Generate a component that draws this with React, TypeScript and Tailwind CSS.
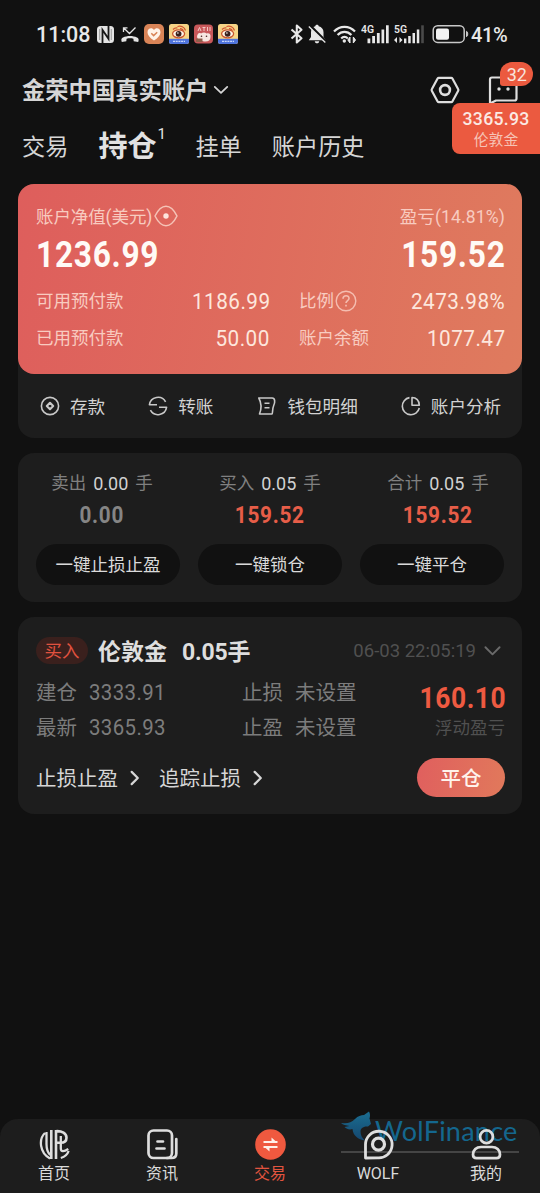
import type { ReactNode } from "react";

const Chevron = ({ className, d }: { className: string; d: string }) => (
  <svg viewBox="0 0 18 12" className={className} fill="none" stroke="currentColor" strokeWidth="2" strokeLinecap="round" strokeLinejoin="round">
    <path d={d} />
  </svg>
);

const Weibo = () => (
  <svg viewBox="0 0 20 20" className="h-5 w-5">
    <defs>
      <clipPath id="wb"><rect width="20" height="20" rx="2.5" /></clipPath>
    </defs>
    <g clipPath="url(#wb)">
      <rect width="20" height="20" fill="#f6d486" />
      <rect y="14.800" width="20" height="5.200" fill="#4f74dc" />
      <path d="M4 17.400h12" stroke="#c9d6fa" strokeWidth="1.400" strokeDasharray="2 .700" />
      <path d="M8.500 2.500c3.500-1 7 .4 8 4M4 5.500c1.500-1.500 3-2 4.500-1.500M11 4.600c1.800 0 2.800.8 3.200 2.300" stroke="#d0522f" strokeWidth="1.300" fill="none" />
      <ellipse cx="9.600" cy="9.800" rx="6" ry="4" fill="#fff4e6" stroke="#c8572f" strokeWidth="1.300" />
      <circle cx="9.600" cy="9.800" r="2.900" fill="#3a201c" />
      <circle cx="8.900" cy="9" r=".8" fill="#fff" />
    </g>
  </svg>
);

function StatusBar() {
  return (
    <div className="flex h-[68px] items-center pl-[36px] text-[#e8e8e8]">
      <span className="w-[61px] pt-[2px] text-[21.500px] leading-none font-medium">11:08</span>
      <svg viewBox="0 0 17 17" className="h-[17px] w-[17px]">
        <rect width="17" height="17" rx="3.500" fill="#e4e4e4" />
        <path d="M5.500 17V4l6 8.800V0" fill="none" stroke="#181818" strokeWidth="1.800" />
        <path d="M2.700 3v11M14.300 3v11" fill="none" stroke="#888" strokeWidth=".8" />
      </svg>
      <svg viewBox="0 0 18 17" className="ml-[7px] h-[17px] w-[18px]">
        <path d="M2.500 6V1.800h4M2.800 2l5.700 5.500 6-6" fill="none" stroke="#e4e4e4" strokeWidth="1.300" />
        <path d="M.4 14.600c-.3-1.400.3-2.300 1.600-3 4-2 10-2 14 0 1.300.7 1.900 1.600 1.600 3l-.4 1.400-4.500-.8-.3-2.500c-2.200-.6-4.600-.6-6.800 0l-.3 2.500-4.500.8z" fill="#e4e4e4" />
      </svg>
      <svg viewBox="0 0 20 20" className="ml-[5px] h-5 w-5">
        <rect width="20" height="20" rx="5" fill="#d98457" />
        <path d="M10 16.500C5.500 13.500 3.500 11 3.500 8.200 3.500 4.300 8 3 10 6c2-3 6.500-1.700 6.500 2.200 0 2.800-2 5.300-6.500 8.300z" fill="#fff3e8" />
        <path d="M7.300 9.300l2.300 2.300 3.600-3.400" fill="none" stroke="#d98457" strokeWidth="1.500" />
      </svg>
      <div className="ml-[5px]"><Weibo /></div>
      <svg viewBox="0 0 19 20" className="ml-[5px] h-5 w-[19px]">
        <rect y=".500" width="19" height="19" rx="4" fill="#c8585a" />
        <path d="M4 7l1.500-3.500L7 7M8.500 3.500h3M10 3.500V7M13.500 3v4M16 3v4" stroke="#f3c9c4" fill="none" />
        <path d="M3 13c0-3 2-5 4-3.500 2-1.300 4-1.300 5.500 0C15 8.500 17 10 16.500 13c0 3-2 4.500-5 4.500S4 17 3 13z" fill="#f7e7e1" />
        <path d="M2 14.500h6.500v3.500H2z" fill="#8f5f4c" />
        <circle cx="7.500" cy="12.300" r=".8" fill="#4a2423" />
        <circle cx="12.500" cy="12.300" r=".8" fill="#4a2423" />
      </svg>
      <div className="ml-[5px]"><Weibo /></div>

      <svg viewBox="0 0 14 20" className="ml-[52px] h-5 w-[14px]" fill="none" stroke="#e8e8e8" strokeWidth="2.100" strokeLinejoin="round">
        <path d="M1.500 5.500l10 8.700L6.800 18.500V1.500l4.700 4.300-10 8.700" />
      </svg>
      <svg viewBox="0 0 19 20" className="ml-1 h-5 w-[19px]">
        <path d="M9 .8c1 0 1.600.6 1.700 1.400 3 .8 4.800 2.900 4.800 6v4.800l2.300 3.300H.8L3 13V8.200c0-3 1.500-5.200 4.300-6C7.400 1.400 8 .8 9 .8zM6.800 17.300h4.400c0 2.700-4.400 2.700-4.400 0z" fill="#e8e8e8" />
        <path d="M2 1.500l16.500 16.500" stroke="#111" strokeWidth="2.500" />
        <path d="M.8 2.500l16.500 16" stroke="#e8e8e8" strokeWidth="1.300" />
      </svg>
      <svg viewBox="0 0 24 20" className="ml-[6px] h-5 w-6">
        <path d="M1 7.500c6-6.300 15-6.300 21 0M4.600 11c4-4.200 9.800-4.200 13.800 0M8.200 14.400c1.900-2 4.700-2 6.600 0" fill="none" stroke="#e8e8e8" strokeWidth="2.200" />
        <circle cx="11.300" cy="17" r="1.700" fill="#e8e8e8" />
        <path d="M14.800 16l2.200-3v6zM22.500 16l-2.200-3v6z" fill="#e8e8e8" stroke="#e8e8e8" />
      </svg>
      <svg viewBox="0 0 29 20" className="ml-[4px] h-5 w-[29px]" fill="#e8e8e8">
        <text x="0" y="8.600" fontSize="10.500" fontWeight="600" textLength="13" lengthAdjust="spacingAndGlyphs" fontFamily="Roboto, sans-serif">4G</text>
        <path d="M6.500 14.500h2.800v4.700H6.500zM11.200 12h2.800v7.200h-2.800zM15.900 9h2.800v10.200h-2.800zM20.500 5.500h2.700v13.700h-2.700zM25 1.300h2.700v17.900H25z" />
      </svg>
      <svg viewBox="0 0 31 20" className="ml-1 h-5 w-[31px]" fill="#e8e8e8">
        <text x="0" y="8.600" fontSize="10.500" fontWeight="600" textLength="13" lengthAdjust="spacingAndGlyphs" fontFamily="Roboto, sans-serif">5G</text>
        <path d="M0 16l3-3v6zM8.500 16l-3-3v6zM10 14.500h2.400v4.700H10zM14.200 12h2.500v7.200h-2.500zM18.500 9H21v10.200h-2.500zM22.800 5.500h2.500v13.700h-2.500z" />
        <path d="M27.200 1.300h2.600v17.900h-2.600z" fill="#4a4a4a" />
      </svg>
      <svg viewBox="0 0 38 20" className="ml-[7px] h-5 w-[38px]">
        <rect x="1.200" y="1.800" width="31" height="16.600" rx="4.500" fill="none" stroke="#c9c9c9" strokeWidth="1.500" />
        <rect x="4" y="4.500" width="13" height="11.200" rx="2" fill="#f2f2f2" />
        <path d="M34.500 7.300c1.700.3 1.700 5 0 5.400z" fill="#c9c9c9" stroke="#c9c9c9" />
      </svg>
      <span className="ml-[1px] origin-left scale-x-[0.950] pt-[2px] text-[21px] leading-none font-medium tracking-[-0.300px]">41%</span>
    </div>
  );
}

function Header() {
  return (
    <header className="relative h-[116px] text-[#d6d6d6]">
      <div className="flex h-[44px] items-center pl-[22px]">
        <span className="pt-[4px] text-[23.300px] leading-none font-bold">金荣中国真实账户</span>
        <Chevron className="ml-[5px] h-3 w-[16px]" d="M2 2.500l7 6.700 7-6.700" />
        <svg viewBox="0 0 30 28" className="ml-[201px] h-7 w-[30px]" fill="none" stroke="#dedede" strokeWidth="2.200" strokeLinejoin="round">
          <path d="M8.800 1.800h12.400q.8 0 1.200.700l5.800 10.800q.4.700 0 1.400l-5.800 10.800q-.4.700-1.200.700H8.800q-.8 0-1.200-.7L1.800 14.700q-.4-.7 0-1.400L7.600 2.500q.4-.7 1.200-.7z" />
          <circle cx="15" cy="14" r="4.900" strokeWidth="2.600" />
        </svg>
        <div className="relative ml-[28px]">
          <svg viewBox="0 0 30 28" className="h-7 w-[30px]" fill="none" stroke="#dedede" strokeWidth="2.200" strokeLinejoin="round">
            <path d="M4 1.500h22.500q2 0 2 2v19q0 2-2 2H8l-6 3V3.500q0-2 2-2z" />
            <circle cx="11" cy="13" r="1.700" fill="#dedede" stroke="none" />
            <circle cx="20" cy="13" r="1.700" fill="#dedede" stroke="none" />
          </svg>
          <span className="absolute top-[-14px] left-[12px] flex h-6 w-[33px] items-center justify-center rounded-[12px] rounded-bl-[3px] bg-[#eb5a3f] pt-[2px] text-[18px] leading-none text-[#f8e3dc]">32</span>
        </div>
      </div>
      <nav className="flex h-[68px] items-center pt-[3px] pl-[22px] text-[23.200px] leading-none">
        <span>交易</span>
        <span className="relative ml-[30px] text-[29px] font-bold text-[#e2e2e2]">
          持仓
          <sup className="absolute top-[-6px] left-[59px] text-[15px] leading-none font-normal">1</sup>
        </span>
        <span className="ml-[39px]">挂单</span>
        <span className="ml-[30px]">账户历史</span>
      </nav>
      <div className="absolute top-[35px] right-0 flex h-[51px] w-[88px] flex-col items-center rounded-l-[8px] bg-[#eb5a40] pt-[6px]">
        <span className="scale-x-[0.930] text-[19px] leading-[19px] font-medium tracking-[0.300px] text-[#fbe9e3]">3365.93</span>
        <span className="mt-[5px] text-[14.800px] leading-[15px] text-[#f6c3b6]">伦敦金</span>
      </div>
    </header>
  );
}

const Action = ({ icon, label, className }: { icon: ReactNode; label: string; className?: string }) => (
  <div className={`flex items-center ${className ?? ""}`}>
    <svg viewBox="0 0 20 20" className="mr-[10px] h-5 w-5" fill="none" stroke="#c8c8c8" strokeWidth="1.600" strokeLinejoin="round">{icon}</svg>
    <span className="pt-[4px]">{label}</span>
  </div>
);

const Amount = ({ label, hint, value }: { label: string; hint?: ReactNode; value: string }) => (
  <div className="flex h-[37px] items-center justify-between">
    <span className="flex items-center text-[17.500px] text-[#f8cbc0]">
      <span className="pt-[3px]">{label}</span>
      {hint}
    </span>
    <span className="origin-right scale-x-[0.940] pt-[2px] tracking-[0.500px]">{value}</span>
  </div>
);

function Account() {
  return (
    <section className="mx-[18px] h-[254px] rounded-[16px] bg-[#1d1d1d]">
      <div className="h-[190px] rounded-[16px] bg-linear-[100deg,#de5e5c,#df7b5e] pt-[21px] pr-[17px] pl-[18px] text-[17.500px] leading-none text-[#f8cbc0]">
        <div className="flex h-[22px] items-center justify-between">
          <div className="flex items-center">
            <span className="pt-[3px] tracking-[-0.100px]">账户净值(美元)</span>
            <svg viewBox="0 0 24 22" className="ml-[2px] h-[22px] w-6" fill="none" stroke="#f5c3b7" strokeWidth="1.500">
              <path d="M1 11C3.500 6 7.500 1.300 12 1.300S20.500 6 23 11c-2.500 5-6.500 9.700-11 9.700S3.500 16 1 11z" strokeLinejoin="round" />
              <circle cx="12" cy="11" r="2.700" fill="#fde4dc" stroke="none" />
            </svg>
          </div>
          <span className="pt-[3px] tracking-[0.150px]">盈亏(14.81%)</span>
        </div>
        <div className="flex h-[54px] items-center justify-between pt-[2px] text-[36px] font-bold tracking-[0.800px] text-[#fffaf6]">
          <span className="origin-left scale-x-[0.880]">1236.99</span>
          <span className="mr-[-1px] origin-right scale-x-[0.880]">159.52</span>
        </div>
        <div className="mt-[1px] grid grid-cols-[234px_29px_1fr] text-[22px] text-[#fde7dd]">
          <Amount label="可用预付款" value="1186.99" />
          <span />
          <Amount
            label="比例"
            value="2473.98%"
            hint={
              <svg viewBox="0 0 22 22" className="ml-[1px] h-[22px] w-[22px]" fill="none" stroke="#f5bdb0" strokeWidth="1.400">
                <circle cx="11" cy="11" r="9.800" />
                <path d="M8 8.700c.2-4 6.200-3.800 6-.2-.1 2-3 2.200-3 4.500M11 14.800v1.800" strokeWidth="1.600" />
              </svg>
            }
          />
          <Amount label="已用预付款" value="50.00" />
          <span />
          <Amount label="账户余额" value="1077.47" />
        </div>
      </div>
      <div className="flex h-[64px] items-center pr-[20px] pl-[22px] text-[17.600px] leading-none text-[#d2d2d2]">
        <Action label="存款" icon={<><circle cx="10" cy="10" r="8.600" /><path d="M10 6.800l3.200 3.200-3.200 3.200L6.800 10z" strokeWidth="2.100" /></>} />
        <Action className="ml-[43px]" label="转账" icon={<path d="M9 8.800H1.400A8.700 8.700 0 0 1 17.600 5.800M11 11.200h7.600A8.700 8.700 0 0 1 2.400 14.200" />} />
        <Action className="ml-[44px]" label="钱包明细" icon={<path d="M1.800 2h13.400c3 0 3 4.500 1.500 7.500s-1 8.500-1.500 8.500H2.500c2-5 2-11-.7-16zM7.500 7.300h5M7.500 11.800h5" />} />
        <Action className="ml-[43px]" label="账户分析" icon={<><path d="M8.500 1.600a8.600 8.600 0 1 0 9.800 10.400" /><path d="M11 1.500v7.700h7.300c0-4.500-3-7.700-7.300-7.700z" /></>} />
      </div>
    </section>
  );
}

const totals = [
  { name: "卖出", lots: "0.00", value: "0.00", action: "一键止损止盈", color: "text-[#858585]", shift: "pr-3" },
  { name: "买入", lots: "0.05", value: "159.52", action: "一键锁仓", color: "text-[#e75d48]", shift: "" },
  { name: "合计", lots: "0.05", value: "159.52", action: "一键平仓", color: "text-[#e75d48]", shift: "pl-3" },
];

function Totals() {
  return (
    <section className="mx-[18px] mt-[15px] grid h-[149px] grid-cols-3 gap-[18px] rounded-[16px] bg-[#1d1d1d] px-[18px] pt-[19px] text-[17.500px] leading-none">
      {totals.map((t) => (
        <div key={t.name} className="flex flex-col items-center whitespace-nowrap">
          <div className={`flex h-[22px] items-center pt-[2px] text-[#808080] ${t.shift}`}>
            <span>{t.name}</span>
            <span className="mx-[7px] text-[18px] text-[#d2d2d2]">{t.lots}</span>
            <span>手</span>
          </div>
          <div className={`flex h-[42px] items-center pt-[1px] text-[23px] font-bold tracking-[0.800px] ${t.color} ${t.shift}`}>
            <span className="scale-x-[0.900]">{t.value}</span>
          </div>
          <button className="mt-[8px] h-[41px] w-full rounded-full bg-[#111] pt-[3px] text-[#dadada]">{t.action}</button>
        </div>
      ))}
    </section>
  );
}

const Field = ({ name, value, num }: { name: string; value: string; num?: boolean }) => (
  <div className="flex h-[35px] items-center">
    <span className="mr-[12px] pt-[3px]">{name}</span>
    <span className={num ? "origin-left scale-x-[0.950] pt-[2px] text-[21.500px] tracking-[0.400px]" : "pt-[3px]"}>{value}</span>
  </div>
);

function Position() {
  return (
    <section className="mx-[18px] mt-[15px] h-[197px] rounded-[16px] bg-[#1d1d1d] pt-[20px] pr-[17px] pl-[18px] text-[20.500px] leading-none text-[#7c7c7c]">
      <div className="flex h-[27px] items-center">
        <span className="flex h-[27px] w-[52px] items-center justify-center rounded-full bg-[#3a201d] pt-[2px] text-[17.500px] text-[#e0523f]">买入</span>
        <span className="ml-[10px] pt-[3px] text-[23px] font-bold text-[#dedede]">伦敦金</span>
        <span className="ml-[15px] pt-[3px] text-[23px] font-bold tracking-[-0.200px] text-[#dedede]">0.05手</span>
        <span className="ml-auto pt-[2px] text-[18.500px] text-[#505050]">06-03 22:05:19</span>
        <Chevron className="mr-[4px] ml-[8px] h-3 w-[17px] text-[#6a6a6a]" d="M1.500 2l7.500 7.500L16.500 2" />
      </div>
      <div className="mt-[10px] grid grid-cols-[206px_1fr_auto]">
        <div>
          <Field name="建仓" value="3333.91" num />
          <Field name="最新" value="3365.93" num />
        </div>
        <div>
          <Field name="止损" value="未设置" />
          <Field name="止盈" value="未设置" />
        </div>
        <div className="flex flex-col items-end pt-[10px]">
          <span className="mr-[-1px] origin-right scale-x-[0.910] text-[29px] font-bold tracking-[0.600px] text-[#ee5a41]">160.10</span>
          <span className="mt-[7px] text-[17.500px] text-[#505050]">浮动盈亏</span>
        </div>
      </div>
      <div className="mt-[14px] flex h-[39px] items-center text-[#d6d6d6]">
        <span className="pt-[3px]">止损止盈</span>
        <Chevron className="ml-[7px] h-[16px] w-[20px]" d="M6 .5L11.500 6 6 11.500" />
        <span className="ml-[14px] pt-[3px]">追踪止损</span>
        <Chevron className="ml-[7px] h-[16px] w-[20px]" d="M6 .5L11.500 6 6 11.500" />
        <button className="ml-auto h-[39px] w-[88px] rounded-full bg-linear-[100deg,#e05f5e,#e1795b] pt-[3px] font-medium text-[#fff3ec]">平仓</button>
      </div>
    </section>
  );
}

const tabs = [
  {
    label: "首页",
    icon: (
      <g fill="none" stroke="#dedede" strokeWidth="2.300">
        <path d="M6 4C-.5 10 .5 24 11 29.500M7.500 3v12c0 5 .5 8 3.800 11" />
        <path d="M12.300 1v29" strokeWidth="2.600" />
        <path d="M17 30V2.200c6-.4 10.500 2.300 10.500 6.500 0 3.500-2.500 5-6 5H17" strokeWidth="2.600" />
        <path d="M21.800 7v12.500c0 3.500 3 3.500 7.500.5M21.800 29c4-1.200 6.700-3.500 7.800-7" />
      </g>
    ),
  },
  {
    label: "资讯",
    icon: (
      <g fill="none" stroke="#dedede" strokeWidth="2.700" strokeLinecap="round">
        <rect x="1.500" y="1.500" width="23.500" height="27.500" rx="5" />
        <path d="M10.500 12.500h5.500M9.500 19.500h8M29.300 10v14.500c0 3-1.800 4.500-4.800 4.500H20" />
      </g>
    ),
  },
  {
    label: "交易",
    active: true,
    icon: (
      <g>
        <circle cx="15.500" cy="15.500" r="15.300" fill="#ef593f" />
        <path d="M8.500 13h14M8.500 18h14" stroke="#fff0e8" strokeWidth="2.200" />
        <path d="M16.500 8.500l5 4.500h-5zM14.500 22.500l-5-4.500h5z" fill="#fff0e8" />
      </g>
    ),
  },
  {
    label: "WOLF",
    icon: (
      <g fill="none" stroke="#dedede" strokeWidth="2.800" strokeLinejoin="round">
        <path d="M2.500 29V15.500a13.300 13.300 0 1 1 12 13.300z" />
        <circle cx="15.500" cy="15.200" r="6" strokeWidth="3.200" />
      </g>
    ),
  },
  {
    label: "我的",
    icon: (
      <g fill="none" stroke="#dedede" strokeWidth="2.700">
        <circle cx="15.500" cy="7.800" r="6.400" />
        <path d="M2 25.500c0-4.500 3.500-7.500 8-7.500h11c4.500 0 8 3 8 7.500 0 2.500-1 3.700-3.500 3.700h-20c-2.500 0-3.500-1.200-3.500-3.700z" />
      </g>
    ),
  },
];

function BottomNav() {
  return (
    <nav className="relative mt-auto h-[74px] rounded-t-[18px] bg-[#1d1d1d]">
      <div className="absolute top-[-9px] left-[341px] h-[43px] w-[178px] border-b-2 border-[#454545]">
        <svg viewBox="0 0 32 32" className="absolute top-[1px] left-0 h-8 w-8">
          <defs>
            <linearGradient id="wolf" x1="0" y1="0" x2="0" y2="1">
              <stop stopColor="#1b6e91" />
              <stop offset="1" stopColor="#15476f" />
            </linearGradient>
          </defs>
          <path d="M0 12c6 1 10 0 14-4 3-3 6-4 9-4l5-3.500c1.500 3 1 5 .5 7l1.500 5.500-3 2.500c-5-.5-7.500 2-7.500 5 0 3.500 1.500 6.500 4.500 9-7-1-12-5-12.500-11.500-3 1-6 0-8-2l5-1C5 14.500 2 14 0 12z" fill="url(#wolf)" />
        </svg>
        <span className="absolute top-[7px] left-[34px] font-[Lato] text-[27px] leading-none tracking-[0.250px] text-[#14678e]">WolFinance</span>
      </div>
      <div className="relative grid grid-cols-5">
        {tabs.map((t) => (
          <div key={t.label} className={`flex flex-col items-center pt-[10px] text-[16px] leading-none ${t.active ? "text-[#e2543f]" : "text-[#dadada]"}`}>
            <svg viewBox="0 0 31 31" className="h-[31px] w-[31px]">{t.icon}</svg>
            <span className="mt-[6px] h-4">{t.label}</span>
          </div>
        ))}
      </div>
    </nav>
  );
}

export default function App() {
  return (
    <main className="flex h-[1193px] w-[540px] flex-col overflow-hidden bg-[#111] font-[Roboto,'Noto_Sans_CJK_SC',sans-serif]">
      <StatusBar />
      <Header />
      <Account />
      <Totals />
      <Position />
      <BottomNav />
    </main>
  );
}
